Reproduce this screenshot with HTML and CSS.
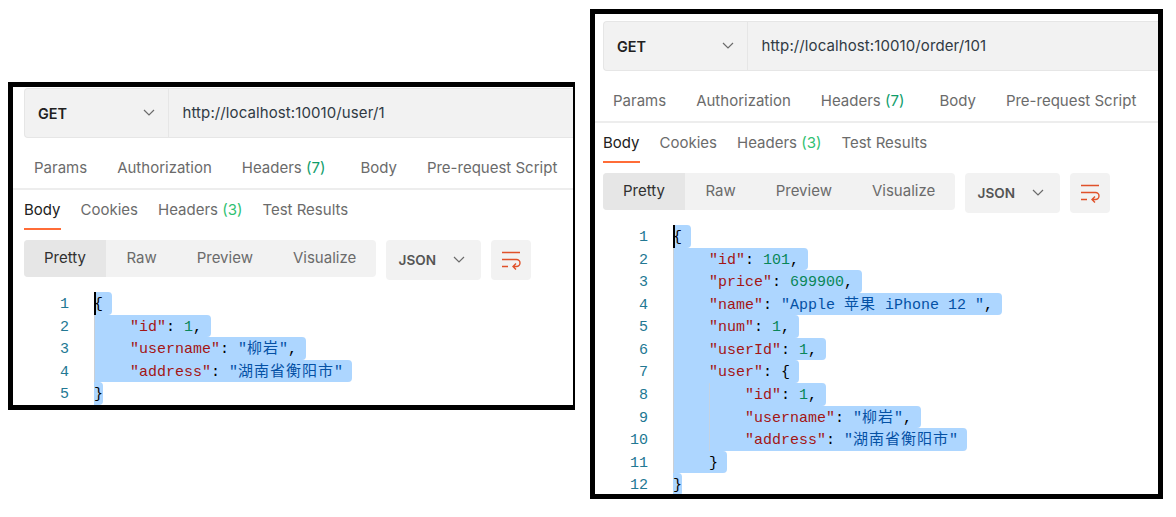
FILE: index.html
```html
<!DOCTYPE html>
<html lang="zh">
<head>
<meta charset="utf-8">
<title>Postman responses</title>
<link rel="stylesheet" href="styles.css">
</head>
<body>
<section class="window window-user">
  <div class="request">
    <div class="method"><b>GET</b><svg class="chev" width="12" height="8" viewBox="0 0 12 8"><path d="M1 1l5 5 5-5"/></svg></div>
    <div class="url">http://localhost:10010/user/1</div>
  </div>
  <nav class="req-tabs">
    <span>Params</span><span>Authorization</span><span class="wide">Headers <i>(7)</i></span><span>Body</span><span>Pre-request Script</span>
  </nav>
  <nav class="res-tabs">
    <span class="active">Body</span><span>Cookies</span><span>Headers <i>(3)</i></span><span>Test Results</span>
  </nav>
  <div class="toolbar">
    <div class="modes"><span class="on">Pretty</span><span>Raw</span><span>Preview</span><span>Visualize</span></div>
    <div class="lang"><b>JSON</b><svg class="chev" width="12" height="8" viewBox="0 0 12 8"><path d="M1 1l5 5 5-5"/></svg></div>
    <div class="wrap"><svg width="40" height="40" viewBox="0 0 40 40"><path d="M11 12.5h18M11 19.5h14.5a3.5 3.5 0 0 1 0 7H22M25 23.5l-3 3 3 3M11 26.5h6"/></svg></div>
  </div>
  <div class="code">
    <div class="line"><span class="num">1</span><span class="sel first">{</span></div>
    <div class="line"><span class="num">2</span><span class="sel"><span class="ind">    </span><span class="k">"id"</span>: <span class="n">1</span>,</span></div>
    <div class="line"><span class="num">3</span><span class="sel"><span class="ind">    </span><span class="k">"username"</span>: <span class="s">"<span class="cjk">柳岩</span>"</span>,</span></div>
    <div class="line"><span class="num">4</span><span class="sel"><span class="ind">    </span><span class="k">"address"</span>: <span class="s">"<span class="cjk">湖南省衡阳市</span>"</span></span></div>
    <div class="line"><span class="num">5</span><span class="sel last">}</span></div>
  </div>
</section>

<section class="window window-order">
  <div class="request">
    <div class="method"><b>GET</b><svg class="chev" width="12" height="8" viewBox="0 0 12 8"><path d="M1 1l5 5 5-5"/></svg></div>
    <div class="url">http://localhost:10010/order/101</div>
  </div>
  <nav class="req-tabs">
    <span>Params</span><span>Authorization</span><span class="wide">Headers <i>(7)</i></span><span>Body</span><span>Pre-request Script</span>
  </nav>
  <nav class="res-tabs">
    <span class="active">Body</span><span>Cookies</span><span>Headers <i>(3)</i></span><span>Test Results</span>
  </nav>
  <div class="toolbar">
    <div class="modes"><span class="on">Pretty</span><span>Raw</span><span>Preview</span><span>Visualize</span></div>
    <div class="lang"><b>JSON</b><svg class="chev" width="12" height="8" viewBox="0 0 12 8"><path d="M1 1l5 5 5-5"/></svg></div>
    <div class="wrap"><svg width="40" height="40" viewBox="0 0 40 40"><path d="M11 12.5h18M11 19.5h14.5a3.5 3.5 0 0 1 0 7H22M25 23.5l-3 3 3 3M11 26.5h6"/></svg></div>
  </div>
  <div class="code">
    <div class="line"><span class="num">1</span><span class="sel first">{</span></div>
    <div class="line"><span class="num">2</span><span class="sel"><span class="ind">    </span><span class="k">"id"</span>: <span class="n">101</span>,</span></div>
    <div class="line"><span class="num">3</span><span class="sel"><span class="ind">    </span><span class="k">"price"</span>: <span class="n">699900</span>,</span></div>
    <div class="line"><span class="num">4</span><span class="sel"><span class="ind">    </span><span class="k">"name"</span>: <span class="s">"Apple <span class="cjk">苹果</span> iPhone 12 "</span>,</span></div>
    <div class="line"><span class="num">5</span><span class="sel"><span class="ind">    </span><span class="k">"num"</span>: <span class="n">1</span>,</span></div>
    <div class="line"><span class="num">6</span><span class="sel"><span class="ind">    </span><span class="k">"userId"</span>: <span class="n">1</span>,</span></div>
    <div class="line"><span class="num">7</span><span class="sel"><span class="ind">    </span><span class="k">"user"</span>: {</span></div>
    <div class="line"><span class="num">8</span><span class="sel"><span class="ind">    </span><span class="ind">    </span><span class="k">"id"</span>: <span class="n">1</span>,</span></div>
    <div class="line"><span class="num">9</span><span class="sel"><span class="ind">    </span><span class="ind">    </span><span class="k">"username"</span>: <span class="s">"<span class="cjk">柳岩</span>"</span>,</span></div>
    <div class="line"><span class="num">10</span><span class="sel"><span class="ind">    </span><span class="ind">    </span><span class="k">"address"</span>: <span class="s">"<span class="cjk">湖南省衡阳市</span>"</span></span></div>
    <div class="line"><span class="num">11</span><span class="sel"><span class="ind">    </span>}</span></div>
    <div class="line"><span class="num">12</span><span class="sel last">}</span></div>
  </div>
</section>
</body>
</html>
```
FILE: styles.css
```css
* { box-sizing: border-box; }
html, body { margin: 0; height: 517px; overflow: hidden; background: #fff; }
body { position: relative; font-family: Inter, "Noto Sans", sans-serif; font-size: 15px; color: #6b6b6b; }

.window {
  position: absolute;
  border: 5px solid #000;
  background: #fff;
  overflow: hidden;
  padding-top: var(--top);
  display: flex;
  flex-direction: column;
}
.window-user { left: 8px; top: 82px; width: 567px; height: 328px; border-right-width: 2px; --pad: 11px; --top: 1px; }
.window-order { left: 590px; top: 9px; width: 573px; height: 490px; --pad: 8px; --top: 7px; }

.request {
  flex: none;
  height: 50px;
  margin-left: var(--pad);
  display: flex;
  background: #f2f2f2;
  border: 1px solid #e6e6e6;
  border-right: 0;
  border-radius: 4px 0 0 4px;
}
.method {
  width: 144px;
  flex: none;
  display: flex;
  align-items: center;
  justify-content: space-between;
  padding: 0 13px 0 13px;
  border-right: 1px solid #e6e6e6;
  color: #212121;
  font-size: 14.4px;
}
.method b { font-weight: 600; }
.chev { fill: none; stroke: #6b6b6b; stroke-width: 1.2; }
.url { padding-left: 13.5px; line-height: 48px; color: #303a44; white-space: nowrap; letter-spacing: 0.1px; }

.req-tabs {
  flex: none;
  height: 52px;
  padding: 9px 0 0 calc(var(--pad) + 10px);
  display: flex;
  align-items: center;
  gap: 30px;
  border-bottom: 2px solid #ededed;
  white-space: nowrap;
}
.req-tabs .wide { margin-right: 5px; }
i { font-style: normal; color: #0f9d6a; }
.res-tabs i { color: #2fbf71; }

.res-tabs {
  flex: none;
  height: 40px;
  margin-left: var(--pad);
  display: flex;
  gap: 20px;
  line-height: 40px;
}
.res-tabs span { height: 40px; white-space: nowrap; }
.res-tabs .active { color: #212121; border-bottom: 2px solid #ff6c37; }

.toolbar {
  flex: none;
  margin: 10px 0 12px var(--pad);
  display: flex;
  align-items: flex-start;
  gap: 10px;
  height: 40px;
}
.modes {
  width: 352px;
  height: 37px;
  display: flex;
  background: #f2f2f2;
  border-radius: 4px;
  overflow: hidden;
  line-height: 36px;
}
.modes span { padding: 0 20px; white-space: nowrap; }
.modes .on { background: #e6e6e6; color: #303030; padding: 0 20.5px 0 20px; }
.lang {
  width: 95px;
  height: 40px;
  display: flex;
  align-items: center;
  justify-content: space-between;
  padding: 0 16px 1px 12.5px;
  background: #f2f2f2;
  border-radius: 4px;
  font-size: 13.6px;
  color: #555;
}
.lang b { font-weight: 600; }
.wrap { width: 40px; height: 40px; background: #f2f2f2; border-radius: 4px; }
.wrap svg { display: block; fill: none; stroke: #e0512a; stroke-width: 1.4; }

.code {
  flex: 1;
  min-height: 0;
  overflow: hidden;
  margin-left: var(--pad);
  font-family: "Liberation Mono", "Noto Sans CJK SC", monospace;
  font-size: 15px;
  color: #000;
}
.line { display: flex; height: 22.58px; line-height: 25.5px; white-space: pre; }
.num { flex: none; width: 45px; margin-right: 25px; text-align: right; color: #237893; }
.sel {
  display: block;
  height: 22.58px;
  padding-right: 9px;
  background: #add6ff;
  border-radius: 0 4px 4px 0;
  box-shadow: inset 1px 0 #c9cfd6;
}
.sel.first { box-shadow: inset 2px 0 #000; }
.sel.last { padding-right: 0; box-shadow: none; }
.ind { display: inline-block; width: 36px; height: 22.58px; vertical-align: top; }
.ind + .ind { box-shadow: inset 1px 0 #c3d3e4; }
.k { color: #a31515; }
.s { color: #0451a5; }
.n { color: #098658; }
.cjk { font-family: "Noto Sans CJK SC", sans-serif; font-size: 15px; letter-spacing: 1px; line-height: 1; }
```
